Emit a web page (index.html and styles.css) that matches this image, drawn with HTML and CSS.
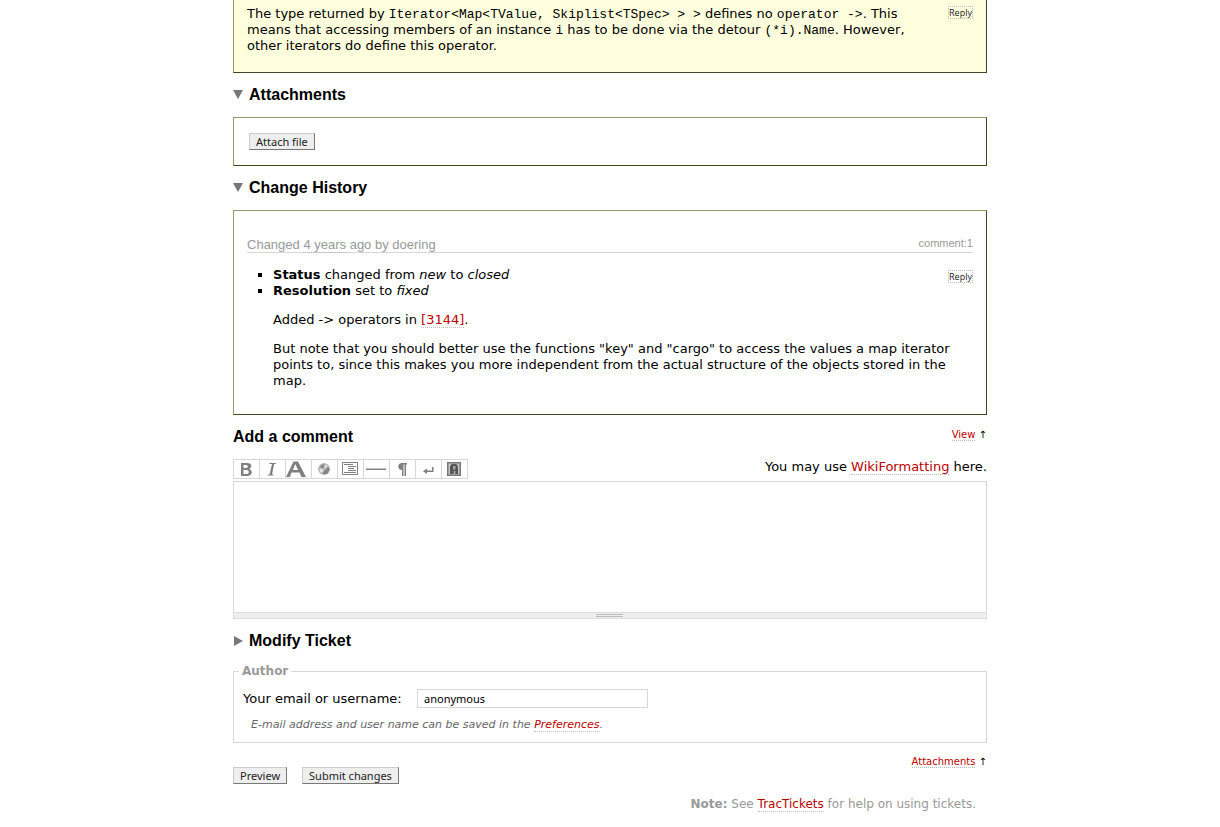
FILE: index.html
```html
<!DOCTYPE html>
<html lang="en">
<head>
<meta charset="utf-8">
<title>Ticket</title>
<link rel="stylesheet" href="styles.css">
</head>
<body>
<main class="content">
  <section class="ticket">
    <p class="description">The type returned by <code>Iterator&lt;Map&lt;TValue, Skiplist&lt;TSpec&gt; &gt; &gt;</code> defines no <code>operator -&gt;</code>. This means that accessing members of an instance <code>i</code> has to be done via the detour <code>(*i).Name</code>. However, other iterators do define this operator.</p>
    <button class="reply" type="button">Reply</button>
  </section>

  <details class="fold" open>
    <summary class="heading"><svg class="arrow" viewBox="0 0 10 10" aria-hidden="true"><path d="M0 0h10L5 9z"/></svg>Attachments</summary>
    <div class="panel attachments"><button class="btn" type="button">Attach file</button></div>
  </details>

  <details class="fold" open>
    <summary class="heading"><svg class="arrow" viewBox="0 0 10 10" aria-hidden="true"><path d="M0 0h10L5 9z"/></svg>Change History</summary>
    <div class="panel history">
      <header class="change-head">
        <span>Changed <a class="age" href="#">4 years</a> ago by doering</span>
        <a class="anchor" href="#">comment:1</a>
      </header>
      <div class="change">
        <ul class="changes">
          <li><strong>Status</strong> changed from <em>new</em> to <em>closed</em></li>
          <li><strong>Resolution</strong> set to <em>fixed</em></li>
        </ul>
        <button class="reply" type="button">Reply</button>
      </div>
      <div class="comment">
        <p>Added -&gt; operators in <a class="link" href="#">[3144]</a>.</p>
        <p>But note that you should better use the functions "key" and "cargo" to access the values a map iterator points to, since this makes you more independent from the actual structure of the objects stored in the map.</p>
      </div>
    </div>
  </details>

  <form>
    <div class="comment-head">
      <h2 class="heading"><label for="comment">Add a comment</label></h2>
      <span class="small"><a class="link" href="#">View</a> ↑</span>
    </div>
    <div class="editor-top">
      <div class="toolbar">
        <button type="button" aria-label="Bold"><svg viewBox="0 0 25 18"><path fill-rule="evenodd" d="M7 3h6c6 0 5 5 2 6 4 1 4 7-2 7H7zM9.500 5v3H12c2.500 0 2.500-3 0-3zM9.500 10v4h3c3 0 3-4 0-4z"/></svg></button>
        <button type="button" aria-label="Italic"><svg viewBox="0 0 25 18"><path d="M9.500 3h6.500l-.3 1h-1.500L12 14.500h1.600l-.3 1H7.500l.3-1h1.700L12 4H9.300z"/></svg></button>
        <button type="button" aria-label="Heading"><svg viewBox="0 0 25 18"><path fill-rule="evenodd" d="M7.500 1.500h4.500L20 17h-4.500l-2-4.500H5.500L4 17H0zM9.300 4l-2.500 6h5.300z"/></svg></button>
        <button type="button" aria-label="Link"><svg viewBox="0 0 25 18"><circle cx="12" cy="9" r="6" fill="#bdbdbd"/><path fill="#858585" d="M8 6l4-2 2 2-2 2-3 0zM12 11l4-4 1.800 2-1.800 4-3 1.500-3-1.500z"/><path fill="#eee" d="M8 9l3 1-1 3-2-2zM13 5l2 1-2 2-1-2z"/></svg></button>
        <button type="button" aria-label="Code block"><svg viewBox="0 0 25 18"><path fill="none" stroke="#808080" d="M4.500 2.500h15v12h-15zM6 4.500h9M10 6.500h8M10 8.500h6M10 10.500h8M6 12.500h12"/></svg></button>
        <button type="button" aria-label="Horizontal rule"><svg viewBox="0 0 25 18"><path d="M2 8.500h20v1.500H2z"/></svg></button>
        <button type="button" aria-label="New paragraph"><svg viewBox="0 0 25 18"><path d="M12 3h5v1.500h-1V16h-1.500V4.500h-1V16H12v-6c-5 0-5-7 0-7z"/></svg></button>
        <button type="button" aria-label="Line break"><svg viewBox="0 0 25 18"><path d="M16 7h1.500v5H11v2l-4-2.800L11 8.500v2h5z"/></svg></button>
        <button type="button" aria-label="Image"><svg viewBox="0 0 25 18"><path fill="#777" d="M5 2h14v14H5z"/><path fill="#c4c4c4" d="M6.500 3.500h11v11h-11z"/><path fill="#a0a0a0" d="M9 3.500h6v11H9z"/><path fill="#555" fill-rule="evenodd" d="M8 14V7c0-4.500 8-4.500 8 0v7h-2.500v-3h-2v3zM11 6v3.500h2.500V6z"/></svg></button>
      </div>
      <span>You may use <a class="link" href="#">WikiFormatting</a> here.</span>
    </div>
    <div class="editor">
      <textarea class="editor-text" id="comment"></textarea>
      <div class="grip"><span class="grip-bars"></span></div>
    </div>

    <details class="fold">
      <summary class="heading"><svg class="arrow" viewBox="0 0 10 10" aria-hidden="true"><path d="M1 0l9 5-9 5z"/></svg>Modify Ticket</summary>
    </details>

    <fieldset class="author">
      <legend>Author</legend>
      <div class="field">
        <label for="author">Your email or username:</label>
        <input class="author-input" id="author" type="text" value="anonymous">
      </div>
      <p class="hint">E-mail address and user name can be saved in the <a class="link" href="#">Preferences</a>.</p>
    </fieldset>

    <div class="bottom">
      <div class="buttons">
        <button class="btn" type="button">Preview</button>
        <button class="btn" type="submit">Submit changes</button>
      </div>
      <span class="small"><a class="link" href="#">Attachments</a> ↑</span>
    </div>
  </form>
  <p class="help"><strong>Note:</strong> See <a class="link" href="#">TracTickets</a> for help on using tickets.</p>
</main>
</body>
</html>
```
FILE: styles.css
```css
* { box-sizing: border-box; }
body {
  margin: 0;
  background: #fff;
  color: #000;
  font: 13px/16px Verdana, "DejaVu Sans", sans-serif;
}
.content { width: 61.8%; margin: 0 auto; }
p { margin: 0; }
code { font: 13px/15px "Liberation Mono", monospace; }
.link {
  color: #b00;
  text-decoration: none;
  border-bottom: 1px dotted #bbb;
}
.small { font-size: 10px; }

.ticket {
  display: flex;
  align-items: flex-start;
  justify-content: space-between;
  gap: 16px;
  padding: 6px 13px 18px;
  background: #ffffdd;
  border: 1px solid #996;
  border-top: 0;
  border-right-color: #442;
  border-bottom-color: #442;
}
.description { flex: 1; }
.reply {
  flex: none;
  height: 13px;
  padding: 0;
  border: 1px dotted #bbb;
  background: none;
  color: #222;
  font: 9px/11px "Open Sans", sans-serif;
}

.heading {
  display: flex;
  align-items: center;
  gap: 6px;
  margin: 12px 0;
  font: bold 16px/20px "Liberation Sans", Arial, sans-serif;
  list-style: none;
}
.heading::-webkit-details-marker { display: none; }
.arrow { width: 10px; height: 10px; fill: #777; }

.panel {
  border: 1px solid #996;
  border-right-color: #442;
  border-bottom-color: #442;
}
.attachments { display: flex; padding: 15px; }
.btn {
  height: 17px;
  padding: 0 6px;
  border: 1px solid #ccc;
  border-right-color: #777;
  border-bottom-color: #777;
  background: #eee;
  color: #222;
  font: 11px/15px "Noto Sans", sans-serif;
}

.history { padding: 26px 13px 25px; }
.change-head {
  display: flex;
  justify-content: space-between;
  border-bottom: 1px solid #d7d7d7;
  color: #999;
  font: 13px/15px "Liberation Sans", Arial, sans-serif;
}
.change-head a { color: #999; text-decoration: none; }
.change-head .age { border-bottom: 1px dotted #bbb; }
.change-head .anchor { font-size: 11px; line-height: 12px; }
.change { display: flex; justify-content: space-between; margin: 14px 0 13px; }
.change .reply { margin-top: 3px; }
.changes { margin: 0; padding-left: 26px; list-style: square; }
.comment { display: grid; gap: 13px; padding-left: 26px; }

.comment-head { display: flex; justify-content: space-between; }
.comment-head .small { margin-top: 12px; }
.editor-top {
  display: flex;
  justify-content: space-between;
  margin-bottom: 2px;
}
.toolbar { display: flex; border: 1px solid #d7d7d7; border-right: 0; }
.toolbar button {
  width: 26px;
  height: 18px;
  padding: 0;
  border: 0;
  border-right: 1px solid #d7d7d7;
  background: #fff;
}
.toolbar svg { display: block; width: 25px; height: 18px; fill: #808080; }
.editor { display: grid; }
.editor-text {
  width: 100%;
  height: 131px;
  padding: 2px;
  border: 1px solid #d7d7d7;
  border-bottom: 0;
  background: #fff;
  resize: none;
  font: 13px/16px "Liberation Mono", monospace;
}
.grip {
  display: grid;
  place-items: center;
  height: 7px;
  border: 1px solid #ddd;
  background: #eee;
}
.grip-bars {
  width: 27px;
  height: 3px;
  border: solid #bbb;
  border-width: 1px 0;
}

.author {
  margin: 0;
  padding: 10px 9px 9px;
  border: 1px solid #d7d7d7;
}
.author legend {
  margin-left: -4px;
  padding: 0 3px;
  color: #999;
  font-size: 12px;
  font-weight: bold;
}
.field { display: flex; align-items: center; gap: 6px; }
.field label { min-width: 168px; }
.author-input {
  width: 231px;
  height: 19px;
  padding: 0 6px;
  border: 1px solid #d7d7d7;
  font: 11px/16px "Noto Sans", sans-serif;
}
.hint {
  margin: 9px 8px 0;
  color: #666;
  font-size: 11px;
  font-style: italic;
}

.bottom { display: flex; justify-content: space-between; padding-top: 11px; }
.buttons { display: flex; gap: 15px; padding-top: 13px; }
.help {
  margin: 12px 11px 16px;
  color: #999;
  font-size: 12px;
  text-align: right;
}
```
